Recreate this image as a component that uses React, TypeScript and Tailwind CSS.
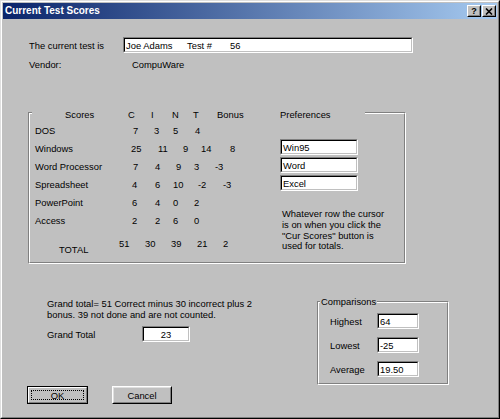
import React from "react";

type Kids = { className?: string; inner?: string; children?: React.ReactNode };

const Sunken = ({ className = "", inner = "", children }: Kids) => (
  <div className={`shrink-0 border border-t-[#808080] border-l-[#808080] border-b-white border-r-white ${className}`}>
    <div
      className={`flex h-full w-full items-center overflow-hidden whitespace-nowrap border border-t-black border-l-black border-b-[#c0c0c0] border-r-[#c0c0c0] bg-white ${inner}`}
    >
      {children}
    </div>
  </div>
);

const Etched = ({ className = "", inner = "", children }: Kids) => (
  <div className={`shrink-0 border border-t-[#808080] border-l-[#808080] border-b-white border-r-white ${className}`}>
    <div className={`h-full border border-t-white border-l-white border-b-[#808080] border-r-[#808080] ${inner}`}>
      {children}
    </div>
  </div>
);

type Row = { label: string; lw: string; cells: [string, string][] };

const rows: Row[] = [
  { label: "DOS", lw: "w-[98px]", cells: [["7", "w-[21px]"], ["3", "w-[19px]"], ["5", "w-[22px]"], ["4", ""]] },
  {
    label: "Windows",
    lw: "w-[96px]",
    cells: [["25", "w-[27px]"], ["11", "w-[25px]"], ["9", "w-[18px]"], ["14", "w-[29px]"], ["8", ""]],
  },
  {
    label: "Word Processor",
    lw: "w-[98px]",
    cells: [["7", "w-[22px]"], ["4", "w-[21px]"], ["9", "w-[18px]"], ["3", "w-[21px]"], ["-3", ""]],
  },
  {
    label: "Spreadsheet",
    lw: "w-[97px]",
    cells: [["4", "w-[23px]"], ["6", "w-[18px]"], ["10", "w-[25px]"], ["-2", "w-[25px]"], ["-3", ""]],
  },
  { label: "PowerPoint", lw: "w-[97px]", cells: [["6", "w-[23px]"], ["4", "w-[18px]"], ["0", "w-[21px]"], ["2", ""]] },
  { label: "Access", lw: "w-[97px]", cells: [["2", "w-[23px]"], ["2", "w-[18px]"], ["6", "w-[21px]"], ["0", ""]] },
];

const totals = ["51", "30", "39", "21", "2"];

const CaptionButton = ({ children }: { children: React.ReactNode }) => (
  <div className="h-[12px] w-[14px] border border-t-white border-l-white border-b-black border-r-black bg-[#c0c0c0]">
    <div className="flex h-full w-full items-center justify-center border border-t-[#c0c0c0] border-l-[#c0c0c0] border-b-[#808080] border-r-[#808080]">
      {children}
    </div>
  </div>
);

export default function App() {
  return (
    <div className="h-[419px] w-[500px] overflow-hidden border border-t-[#dfdfdf] border-l-[#dfdfdf] border-b-black border-r-black bg-[#c0c0c0] font-['Liberation_Sans',Arial,sans-serif] text-[9.4px] leading-[11px] text-black">
      <div className="flex h-full flex-col border border-t-white border-l-white border-b-[#808080] border-r-[#808080] p-[1px]">
        {/* Title bar */}
        <div className="flex h-[16px] shrink-0 items-center justify-between bg-[linear-gradient(to_right,#0a246a,#a6caf0)] pl-[2px] pr-[1px]">
          <span className="text-[10px] font-bold leading-[12px] text-white">Current Test Scores</span>
          <div className="flex gap-[1px]">
            <CaptionButton>
              <span className="text-[9px] font-bold leading-[9px]">?</span>
            </CaptionButton>
            <CaptionButton>
              <svg width="8" height="7" viewBox="0 0 8 7">
                <path d="M1 0.5 L7 6.5 M7 0.5 L1 6.5" stroke="black" strokeWidth="1.6" />
              </svg>
            </CaptionButton>
          </div>
        </div>

        {/* Current test */}
        <div className="mt-[18px] flex h-[16px] items-center pl-[26px]">
          <span className="w-[94px] shrink-0">The current test is</span>
          <Sunken className="h-[16px] w-[290px]" inner="pl-[1px]">
            <span className="w-[61px] shrink-0">Joe Adams</span>
            <span className="w-[43px] shrink-0">Test #</span>
            <span>56</span>
          </Sunken>
        </div>

        {/* Vendor */}
        <div className="mt-[5px] flex h-[12px] items-center pl-[26px]">
          <span className="w-[103px] shrink-0">Vendor:</span>
          <span>CompuWare</span>
        </div>

        {/* Scores group */}
        <Etched className="ml-[25px] mt-[42px] h-[152px] w-[378px]">
          <div className="-mt-[6px] ml-[2px] flex h-[12px] w-[333px] items-center bg-[#c0c0c0] pl-[33px]">
            <span className="w-[63px] shrink-0">Scores</span>
            <span className="w-[23px] shrink-0">C</span>
            <span className="w-[21px] shrink-0">I</span>
            <span className="w-[21px] shrink-0">N</span>
            <span className="w-[24px] shrink-0">T</span>
            <span className="w-[63px] shrink-0">Bonus</span>
            <span>Preferences</span>
          </div>
          <div className="mt-[1px] flex">
            <div className="w-[250px] shrink-0 pl-[5px]">
              {rows.map((r) => (
                <div key={r.label} className="flex h-[18px] items-center whitespace-nowrap">
                  <span className={`${r.lw} shrink-0`}>{r.label}</span>
                  {r.cells.map(([t, w], i) => (
                    <span key={i} className={`${w} shrink-0`}>
                      {t}
                    </span>
                  ))}
                </div>
              ))}
              <div className="mt-[5px] flex h-[18px] items-center">
                <span className="mt-[12px] w-[84px] shrink-0 pl-[24px]">TOTAL</span>
                {totals.map((t, i) => (
                  <span key={i} className="w-[26px] shrink-0">
                    {t}
                  </span>
                ))}
              </div>
            </div>
            <div className="flex flex-col pt-[18px]">
              <div className="flex flex-col gap-[2px]">
                <Sunken className="h-[16px] w-[78px]" inner="pl-[1px]">
                  Win95
                </Sunken>
                <Sunken className="h-[16px] w-[78px]" inner="pl-[1px]">
                  Word
                </Sunken>
                <Sunken className="h-[16px] w-[78px]" inner="pl-[1px]">
                  Excel
                </Sunken>
              </div>
              <p className="mt-[18px] pl-[2px] leading-[10.8px]">
                Whatever row the cursor
                <br />
                is on when you click the
                <br />
                "Cur Scores" button is
                <br />
                used for totals.
              </p>
            </div>
          </div>
        </Etched>

        {/* Bottom section */}
        <div className="flex items-start">
          <div className="ml-[44px] w-[270px] shrink-0 pt-[35px]">
            <p className="leading-[10.5px]">
              Grand total= 51 Correct minus 30 incorrect plus 2
              <br />
              bonus. 39 not done and are not counted.
            </p>
            <div className="mt-[6px] flex h-[16px] items-center">
              <span className="w-[95px] shrink-0">Grand Total</span>
              <Sunken className="h-[16px] w-[48px]" inner="justify-center">
                23
              </Sunken>
            </div>
          </div>
          <div className="pt-[37px]">
            <Etched className="h-[84px] w-[132px]">
              <div className="-mt-[8px] ml-[1px] flex h-[12px] w-fit items-center bg-[#c0c0c0] px-[1px]">
                Comparisons
              </div>
              <div className="mt-[6px] flex flex-col gap-[8px] pl-[11px]">
                {[
                  ["Highest", "64"],
                  ["Lowest", "-25"],
                  ["Average", "19.50"],
                ].map(([l, v]) => (
                  <div key={l} className="flex h-[16px] items-center">
                    <span className="w-[47px] shrink-0">{l}</span>
                    <Sunken className="h-[16px] w-[42px]" inner="pl-[1px]">
                      {v}
                    </Sunken>
                  </div>
                ))}
              </div>
            </Etched>
          </div>
        </div>

        {/* Buttons */}
        <div className="mt-[1px] flex gap-[24px] pl-[24px]">
          <div className="h-[18px] w-[61px] border border-black">
            <div className="h-full border border-t-white border-l-white border-b-[#808080] border-r-[#808080] p-[2px]">
              <div className="flex h-full items-center justify-center border border-dotted border-black">OK</div>
            </div>
          </div>
          <div className="h-[18px] w-[60px] border border-t-white border-l-white border-b-black border-r-black">
            <div className="flex h-full items-center justify-center border border-t-[#dfdfdf] border-l-[#dfdfdf] border-b-[#808080] border-r-[#808080]">
              Cancel
            </div>
          </div>
        </div>
      </div>
    </div>
  );
}
